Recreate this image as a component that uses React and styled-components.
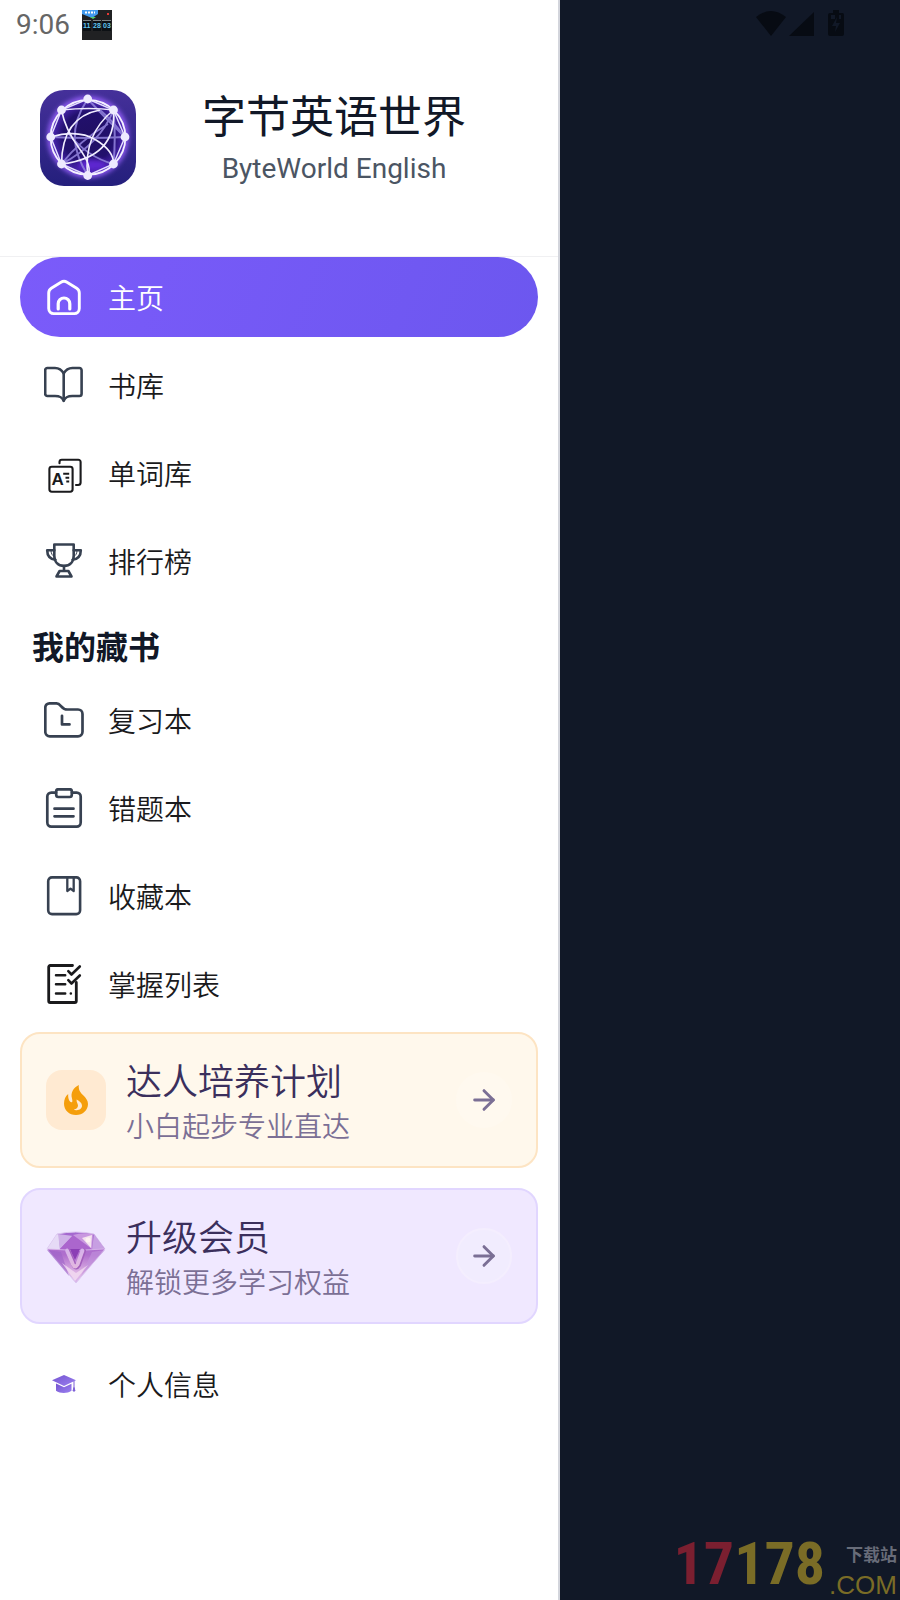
import React from 'react';
import styled, { createGlobalStyle, css } from 'styled-components';
import { ArrowRight } from 'lucide-react';

const GlobalStyle = createGlobalStyle`
	* { box-sizing: border-box; }

	body {
		margin: 0;
		background-color: #111827;
		font-family: 'Noto Sans CJK SC', Roboto, sans-serif;
	}
`;

const Page = styled.div`
	display: flex;
	min-height: 100vh;
`;

const Drawer = styled.aside`
	flex: 0 1 560px;
	display: flex;
	flex-direction: column;
	background-color: #fff;
	border-right: 2px solid #d3d5dc;
`;

const Backdrop = styled.div`
	flex: 1 1 0;
	display: flex;
	flex-direction: column;
	justify-content: space-between;
	align-items: flex-end;
`;

const StatusBar = styled.div`
	display: flex;
	align-items: center;
	height: 50px;
	padding: 0 16px;
	gap: 12px;
	color: #666;
	font-family: Roboto, sans-serif;
	font-size: 28px;
	line-height: 32px;
`;

const SystemIcons = styled.div`
	display: flex;
	align-items: center;
	height: 48px;
	padding-right: 56px;
	color: #070b13;
`;

const Header = styled.header`
	display: flex;
	align-items: flex-start;
	gap: 14px;
	height: 207px;
	padding: 32px 40px 0;
	border-bottom: 1px solid #f0f0f2;
`;

const Brand = styled.div`
	flex: 1;
	padding-top: 8px;
	text-align: center;
`;

const BrandTitle = styled.h1`
	margin: 0;
	color: #111827;
	font-size: 44px;
	font-weight: 400;
	line-height: 48px;
`;

const BrandSubtitle = styled.p`
	margin: 0;
	padding-top: 15px;
	color: #4b5563;
	font-family: Roboto, sans-serif;
	font-size: 28px;
	line-height: 32px;
`;

const Logo = styled.svg`
	flex: none;
	margin-top: 8px;
	border-radius: 24px;
`;

const Content = styled.div`
	padding: 0 20px;
`;

const Nav = styled.nav`
	display: flex;
	flex-direction: column;
	gap: 8px;
`;

const activeItem = css`
	color: #fff;
	background-image: linear-gradient(110deg, #7b5bfa 0%, #6c57ef 100%);
`;

const NavItem = styled.a`
	display: flex;
	align-items: center;
	gap: 24px;
	height: 80px;
	padding: 0 24px;
	border-radius: 40px;
	color: #1a1a1c;
	font-size: 28px;
	font-weight: 350;
	line-height: 40px;
	text-decoration: none;

	${({ $active }) => $active && activeItem}

	> svg { flex: none; }
`;

const SectionTitle = styled.h2`
	margin: 0;
	padding: 24px 12px 15px;
	color: #111827;
	font-size: 32px;
	font-weight: 700;
	line-height: 40px;
`;

const Cards = styled.div`
	display: flex;
	flex-direction: column;
	gap: 20px;
	padding: 8px 0 20px;
`;

const tones = {
	orange: { background: '#fff8ec', border: '#fde4c3', circle: '#fff9ef', ring: '#fff9ef' },
	purple: { background: '#f0e8ff', border: '#e1d6ff', circle: '#f1ecfe', ring: '#f4eefe' },
};

const Card = styled.a`
	display: flex;
	align-items: center;
	gap: 20px;
	height: 136px;
	padding: 0 24px;
	border: 2px solid ${({ $tone }) => tones[$tone].border};
	border-radius: 20px;
	background-color: ${({ $tone }) => tones[$tone].background};
	font-weight: 350;
	text-decoration: none;
`;

const CardIcon = styled.span`
	flex: none;
	display: flex;
	align-items: center;
	justify-content: center;
	width: 60px;
	height: 60px;
	border-radius: 16px;
	background-color: ${({ $filled }) => $filled ? '#ffead2' : 'transparent'};
`;

const CardText = styled.span`
	flex: 1;
	display: flex;
	flex-direction: column;
`;

const CardTitle = styled.span`
	color: #3b2f5c;
	font-size: 36px;
	line-height: 50px;
`;

const CardNote = styled.span`
	color: #7b6f95;
	font-size: 28px;
	line-height: 42px;
`;

const CardArrow = styled.span`
	flex: none;
	display: flex;
	align-items: center;
	justify-content: center;
	width: 56px;
	height: 56px;
	border: 2px solid ${({ $tone }) => tones[$tone].ring};
	border-radius: 50%;
	background-color: ${({ $tone }) => tones[$tone].circle};
	color: #7b6f95;
`;

const Watermark = styled.div`
	display: flex;
	align-items: flex-end;
	gap: 4px;
	padding-right: 3px;
	color: #7a6c26;
	white-space: nowrap;
`;

const WatermarkNumber = styled.span`
	font-family: 'Roboto Condensed', 'Liberation Sans Narrow', 'Liberation Sans', sans-serif;
	font-size: 60px;
	font-weight: 700;
	line-height: 72px;

	> em {
		color: #7b1f30;
		font-style: normal;
	}
`;

const WatermarkSide = styled.span`
	display: flex;
	flex-direction: column;
	align-items: flex-end;
	font-family: 'Liberation Sans', 'Noto Sans CJK SC', sans-serif;
	font-size: 26px;
	line-height: 30px;

	> small {
		color: #686c79;
		font-size: 17px;
		font-weight: 700;
		line-height: 28px;
	}
`;

const Icon = ({ children, color = '#374151', width = 2.6 }) => (
	<svg
		width="40"
		height="40"
		viewBox="0 0 40 40"
		fill="none"
		stroke={color}
		strokeWidth={width}
		strokeLinecap="round"
		strokeLinejoin="round"
		aria-hidden="true"
	>
		{children}
	</svg>
);

const HomeIcon = () => (
	<Icon color="#fff" width={2.9}>
		<path d="M4.7 16c0-2.200.9-3.700 2.600-4.800L17 5.200c2-1.200 4-1.200 6 0l9.700 6c1.700 1.100 2.600 2.600 2.600 4.800v15.600a5 5 0 0 1-5 5H9.700a5 5 0 0 1-5-5Z" />
		<path d="M14.200 32v-5.200a5.800 5.800 0 0 1 11.600 0V32" strokeWidth="3.2" />
	</Icon>
);

const BookIcon = () => (
	<Icon>
		<path d="M19.7 8.5C17.6 4.600 14.800 3 11 3H3.400a2.200 2.200 0 0 0-2.200 2.200v23.600A2.200 2.200 0 0 0 3.400 31H11c4.300 0 7 .6 8.700 4.800 1.700-4.200 4.400-4.800 8.700-4.800h7a2.200 2.200 0 0 0 2.200-2.200V5.200A2.200 2.200 0 0 0 35.400 3h-7c-3.800 0-6.600 1.600-8.700 5.500Z" />
		<path d="M19.700 8.500v27" />
	</Icon>
);

const WordsIcon = () => (
	<Icon color="#1a1a1c" width={2.1}>
		<rect x="5.4" y="13.7" width="23.2" height="25" rx="2.4" />
		<path d="M15.500 10.200V9a2.300 2.300 0 0 1 2.300-2.300h16.500A2.300 2.300 0 0 1 36.600 9v20.500a2.500 2.500 0 0 1-2.500 2.500H32" />
		<path d="M19.200 20.700h6M21.500 24.700h3.700M22.300 28.500h2.900" strokeLinecap="butt" />
		<text x="7.6" y="32" fill="#1a1a1c" stroke="none" fontFamily="Liberation Sans, sans-serif" fontSize="17" fontWeight="700">A</text>
	</Icon>
);

const TrophyIcon = () => (
	<Icon width={2.6}>
		<path d="M10.300 3.500h19.400v11.200c0 6.200-3.800 10.200-9.700 10.200s-9.700-4-9.700-10.200Z" />
		<path d="M10.300 9.200H3.200c0 5.200 2.600 8.800 8.300 9.600M29.700 9.200h7.100c0 5.200-2.600 8.800-8.300 9.600" />
		<path d="M7 10c.2 2.800 1.300 4.600 3.400 5.600M33 10c-.2 2.800-1.300 4.600-3.400 5.600" strokeWidth="1" />
		<path d="M20 25v5M15.600 30h8.800l3.100 5.500h-15Z" />
	</Icon>
);

const ReviewIcon = () => (
	<Icon width={2.7}>
		<path d="M1.300 7.500a4.200 4.200 0 0 1 4.200-4.200h7c4.800 0 4.300 6.200 11 6.200H34a4.500 4.500 0 0 1 4.500 4.500v17.800a4.500 4.500 0 0 1-4.500 4.500H5.800a4.500 4.500 0 0 1-4.500-4.500Z" />
		<path d="M18 15.800v8.600h7.500" />
	</Icon>
);

const MistakesIcon = () => (
	<Icon width={2.7}>
		<path d="M12 4.600H7.300a4 4 0 0 0-4 4v26a4 4 0 0 0 4 4h25.400a4 4 0 0 0 4-4v-26a4 4 0 0 0-4-4H28" />
		<rect x="12.2" y="1.3" width="15.6" height="7.7" rx="2.2" />
		<path d="M10.500 20.700h19M10.500 28.300h19" />
	</Icon>
);

const FavoritesIcon = () => (
	<Icon>
		<rect x="4.2" y="1.4" width="31.9" height="36.7" rx="3.8" />
		<path d="M23.300 2v13l3.200-2.400 3.200 2.400V2" strokeWidth="2.3" />
	</Icon>
);

const MasteryIcon = () => (
	<Icon color="#1a1a1c" width={2.8}>
		<path d="M28.500 1.500H6.200a1.500 1.500 0 0 0-1.500 1.500v34a1.500 1.500 0 0 0 1.500 1.500h24.600a1.500 1.500 0 0 0 1.500-1.500V18.500" />
		<path d="M12 11.300h9.200M12 20.300h9.200M12 29.500h9.200M26.800 29.500h.1" strokeWidth="2.5" />
		<path d="m24.300 7.200 3.200 3.300 8.300-8M24.300 16.200l3.200 3.300 8.300-8" strokeWidth="2.6" />
	</Icon>
);

const ProfileIcon = () => (
	<svg width="40" height="40" viewBox="0 0 40 40" aria-hidden="true">
		<defs>
			<linearGradient id="cap" x1="0" y1="0" x2="1" y2="1">
				<stop offset="0" stopColor="#7454d0" />
				<stop offset="1" stopColor="#9b80f0" />
			</linearGradient>
		</defs>
		<path d="M20 11 32 16.200 20 22 8 16.200Z" fill="url(#cap)" />
		<path d="M12 19.500 20 23.300l7.500-3.600v7c-4.200 3-11.300 3-15.500 0Z" fill="url(#cap)" />
		<path d="M30 17v8M30 23.500l-1 3.500h2Z" stroke="#7c5fd6" strokeWidth="1" fill="#7c5fd6" />
	</svg>
);

const FlameIcon = () => (
	<svg width="24" height="30" viewBox="0 0 24 30" fill="#f59e0b" aria-hidden="true">
		<path fillRule="evenodd" d="M14.800 0c-.5 5 1.500 7.500 4.400 10.200C22 13 24 15.500 24 19c0 6.200-5.200 11-12 11S0 25.200 0 18.700C0 14.500 1.500 11 4.200 9c-.2 3.500.4 7 3 8.200 1.600.4 1.300-1.700.7-4.200C6.600 8 9 3 14.800 0Zm-2.200 14.500c3 1.500 5.400 3.500 5.400 6.300 0 2.500-2.500 4.400-5.200 4.400-1.200 0-2.300-.4-3-1 2 .2 4.200-1 4.200-3.600 0-2-1.800-3.600-1.400-6.100Z" />
	</svg>
);

const DiamondIcon = () => (
	<svg width="60" height="60" viewBox="0 0 60 60" aria-hidden="true">
		<defs>
			<linearGradient id="gemBody" x1="0" y1="0" x2="0" y2="1">
				<stop offset="0" stopColor="#a368cf" />
				<stop offset=".45" stopColor="#b06fcd" />
				<stop offset=".8" stopColor="#ddb3e4" />
				<stop offset="1" stopColor="#d9b4ea" />
			</linearGradient>
			<linearGradient id="gemLetter" x1="0" y1="0" x2="0" y2="1">
				<stop offset="0" stopColor="#d7b3ea" />
				<stop offset="1" stopColor="#e2b8e0" />
			</linearGradient>
			<filter id="gemSoft"><feGaussianBlur stdDeviation=".5" /></filter>
		</defs>
		<path d="M11 8Q30 4 48 8L59 23 30 57 1 23Z" fill="url(#gemBody)" stroke="#dcc8f0" strokeWidth="1" strokeLinejoin="round" />
		<g filter="url(#gemSoft)">
			<path d="M11 8 1 23l13 .5L13 9Z" fill="#e6daf6" />
			<path d="m12 8 15 2-13 13Z" fill="#cfb2e8" />
			<path d="m27 9 19 14H14Z" fill="#ab66cd" />
			<path d="M27 9Q37 6 47 8l-1 15Z" fill="#c998e0" />
			<path d="m36 12 10-3-1 13Z" fill="#f4e2ee" />
			<path d="M48 8 59 23l-13 .5Z" fill="#c79fe2" />
			<path d="m1 24 14 2 8 24Z" fill="#9c62c8" opacity=".6" />
			<path d="M59 24 46 26 35 50Z" fill="#c193dd" opacity=".6" />
			<path d="m16 37 13 18 13-16-12 8Z" fill="#f6e2f4" opacity=".7" />
		</g>
		<path d="M2 23q28 3 56 0" fill="none" stroke="#dcbcec" strokeWidth=".8" />
		<path d="m24 23 5 11 5-11Z" fill="#8b3fb5" />
		<path d="m22 25 6 14q2 4 4.500 0l5-14" fill="none" stroke="#a35fbd" strokeWidth="5" strokeLinecap="round" strokeLinejoin="round" />
		<path d="m21 24.500 6 14q2 4 4.500 0l5-14" fill="none" stroke="url(#gemLetter)" strokeWidth="3.8" strokeLinecap="round" strokeLinejoin="round" />
		<circle cx="42" cy="14" r="2.500" fill="#fff6f2" opacity=".8" />
	</svg>
);

const nodes = [
	[47.7, 9], [73.5, 20], [85, 47], [73.5, 74], [47.7, 85.5], [21.5, 74], [10.7, 47], [21.5, 20],
];

const AppLogo = () => (
	<Logo width="96" height="96" viewBox="0 0 96 96" aria-hidden="true">
		<defs>
			<linearGradient id="logoBg" x1="0" y1="0" x2="0" y2="1">
				<stop offset="0" stopColor="#45309a" />
				<stop offset="1" stopColor="#241f7c" />
			</linearGradient>
			<radialGradient id="logoCore" cx=".5" cy=".5" r=".5">
				<stop offset="0" stopColor="#200f62" />
				<stop offset=".7" stopColor="#22106e" />
				<stop offset="1" stopColor="#4a25b0" />
			</radialGradient>
			<filter id="logoGlow" x="-20%" y="-20%" width="140%" height="140%">
				<feGaussianBlur stdDeviation="2.5" />
			</filter>
		</defs>
		<rect width="96" height="96" fill="url(#logoBg)" />
		<circle cx="48" cy="47" r="38" fill="none" stroke="#9a62ff" strokeWidth="5" filter="url(#logoGlow)" />
		<circle cx="48" cy="47" r="36" fill="url(#logoCore)" />
		<ellipse cx="52" cy="75" rx="15" ry="6" fill="#5d26d0" filter="url(#logoGlow)" />
		<g fill="none" stroke="#9385de" strokeWidth="2" opacity=".85">
			<path d="M47.700 9C28 38 33 61 47.700 85.500M47.700 9Q66 29 85 47M73.500 20Q76 47 73.500 74" />
			<path d="M10.700 47Q49 49 85 47M21.500 74Q60 54 73.500 20M21.500 74Q39 51 68 34" />
			<path d="M28 43Q47 67 73.500 74M60 20Q71 29 85 47" />
		</g>
		<g fill="none" stroke="#f0edff" strokeWidth="1.6">
			<path d="M21.500 20Q50 17 73.500 20M21.500 20Q25 39 39 58T47.700 85.500" />
			<path d="M10.700 47Q38 39 56 50T73.500 74M21.500 74Q22 27 60 20M21.500 74C56 70 76 54 73.500 20" />
			<path d="M73.500 20Q43 45 47.700 85.500" />
		</g>
		<polygon
			points={nodes.map((node) => node.join(',')).join(' ')}
			fill="none"
			stroke="#e4dfff"
			strokeWidth="1.5"
		/>
		<circle cx="48" cy="47.3" r="37.4" fill="none" stroke="#f4f1ff" strokeWidth="1.8" />
		<g fill="#eeebff">
			{nodes.map(([x, y]) => <circle key={`${x}-${y}`} cx={x} cy={y} r="4.4" />)}
		</g>
	</Logo>
);

const ClockAppIcon = () => (
	<svg width="30" height="30" viewBox="0 0 30 30" aria-hidden="true">
		<rect width="30" height="30" fill="#202123" />
		<path d="M0 0h16v4l-3 2-3 2-5-2-5-2Z" fill="#4199ed" />
		<path d="M8 7h6l-3 2Z" fill="#55d36a" />
		<path d="M3 2.500h10" stroke="#fff" strokeWidth="2" strokeDasharray="2 1" />
		<rect x="25" y="3" width="2" height="2" fill="#e53935" />
		<path d="M1 10h8v11H1zM11 10h8v11h-8zM20 10h9v11h-9z" fill="#0c1014" />
		<path d="M1 10.500h8M11 10.500h8M20 10.500h9" stroke="#7d8589" strokeWidth="1" />
		<g fill="#62c5ef" fontFamily="Liberation Sans, sans-serif" fontSize="7" fontWeight="700">
			<text x="1" y="18">11</text>
			<text x="11" y="18">28</text>
			<text x="21" y="18">03</text>
		</g>
	</svg>
);

const StatusIcons = () => (
	<svg width="88" height="28" viewBox="0 0 88 28" fill="currentColor" aria-hidden="true">
		<path d="M0 7Q15-5 30 7L15 26Z" />
		<path d="M58 2v24H33Z" />
		<path fillRule="evenodd" d="M77 0h6v3h3.500Q88 3 88 5v19q0 2-2 2H74q-2 0-2-2V5q0-2 2-2h3ZM75 5v4h4V5Zm8 0v4h2V5Zm-2 2-5 9h4l-1 6 5-9h-4Z" />
	</svg>
);

const mainItems = [
	{ label: '主页', icon: HomeIcon, active: true },
	{ label: '书库', icon: BookIcon },
	{ label: '单词库', icon: WordsIcon },
	{ label: '排行榜', icon: TrophyIcon },
];

const collectionItems = [
	{ label: '复习本', icon: ReviewIcon },
	{ label: '错题本', icon: MistakesIcon },
	{ label: '收藏本', icon: FavoritesIcon },
	{ label: '掌握列表', icon: MasteryIcon },
];

const profileItems = [{ label: '个人信息', icon: ProfileIcon }];

const promos = [
	{ title: '达人培养计划', note: '小白起步专业直达', tone: 'orange', icon: FlameIcon, filled: true },
	{ title: '升级会员', note: '解锁更多学习权益', tone: 'purple', icon: DiamondIcon },
];

const NavList = ({ items }) => (
	<Nav>
		{items.map(({ label, icon: ItemIcon, active }) => (
			<NavItem key={label} href="#" $active={active} aria-current={active ? 'page' : undefined}>
				<ItemIcon />
				{label}
			</NavItem>
		))}
	</Nav>
);

const App = () => (
	<Page lang="zh-CN">
		<GlobalStyle />
		<Drawer>
			<StatusBar>
				<span>9:06</span>
				<ClockAppIcon />
			</StatusBar>
			<Header>
				<AppLogo />
				<Brand>
					<BrandTitle>字节英语世界</BrandTitle>
					<BrandSubtitle>ByteWorld English</BrandSubtitle>
				</Brand>
			</Header>
			<Content>
				<NavList items={mainItems} />
				<SectionTitle>我的藏书</SectionTitle>
				<NavList items={collectionItems} />
				<Cards>
					{promos.map(({ title, note, tone, icon: PromoIcon, filled }) => (
						<Card key={title} href="#" $tone={tone}>
							<CardIcon $filled={filled}><PromoIcon /></CardIcon>
							<CardText>
								<CardTitle>{title}</CardTitle>
								<CardNote>{note}</CardNote>
							</CardText>
							<CardArrow $tone={tone}><ArrowRight size={32} strokeWidth={2.2} /></CardArrow>
						</Card>
					))}
				</Cards>
				<NavList items={profileItems} />
			</Content>
		</Drawer>
		<Backdrop>
			<SystemIcons><StatusIcons /></SystemIcons>
			<Watermark>
				<WatermarkNumber><em>17</em>178</WatermarkNumber>
				<WatermarkSide>
					<small>下载站</small>
					.COM
				</WatermarkSide>
			</Watermark>
		</Backdrop>
	</Page>
);

export default App;
